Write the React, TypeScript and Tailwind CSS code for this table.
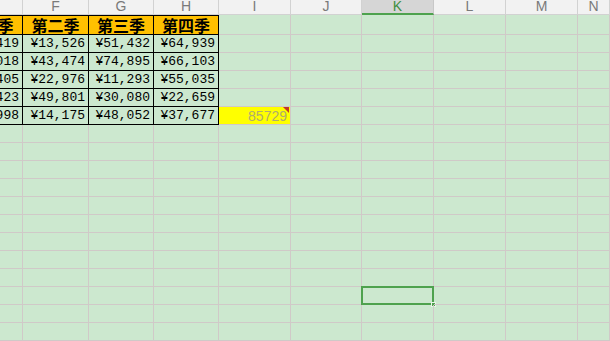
import React from 'react';

const letters = ['E', 'F', 'G', 'H', 'I', 'J', 'K', 'L', 'M', 'N'];

const quarters = ['第一季', '第二季', '第三季', '第四季'];

const values = [
  ['¥32,419', '¥13,526', '¥51,432', '¥64,939'],
  ['¥57,018', '¥43,474', '¥74,895', '¥66,103'],
  ['¥83,405', '¥22,976', '¥11,293', '¥55,035'],
  ['¥17,423', '¥49,801', '¥30,080', '¥22,659'],
  ['¥26,998', '¥14,175', '¥48,052', '¥37,677'],
];

const emptyRows = 12;

const gridCols = 'grid grid-cols-[23px_66px_65px_65px_72px_71px_72px_72px_72px_1fr]';

const App: React.FC = () => {
  return (
    <div className="w-[610px] h-[341px] overflow-hidden bg-[#cce8cf] font-['Liberation_Sans',sans-serif]">
      {/* column headers */}
      <div className={`${gridCols} h-[15px]`}>
        {letters.map((l, i) => (
          <div
            key={l}
            className={
              l === 'K'
                ? 'flex justify-center overflow-hidden bg-[#d6d6d6] border-r border-[#c8c8c8] border-b-2 border-b-[#4ea24e] text-[#3f8f3f] text-[14px] leading-[12px]'
                : 'flex justify-end overflow-hidden bg-[#f2f2f2] border-r border-b border-[#d2d2d2] text-[#7a7a7a] text-[14px] leading-[12px]'
            }
          >
            <div className={l === 'K' ? 'text-center' : i === 0 ? 'w-[65px] shrink-0 text-center' : 'w-full shrink-0 text-center'}>{l}</div>
          </div>
        ))}
      </div>

      {/* quarter header row */}
      <div className={`${gridCols} h-[20px]`}>
        {letters.map((l, i) =>
          i < 4 ? (
            <div key={l} className="flex justify-end items-center overflow-hidden bg-[#ffc000] border-t border-r border-b border-black">
              <div className={`${i === 0 ? 'w-[65px]' : 'w-full'} shrink-0 text-center text-[16px] leading-[18px] font-bold text-black font-['Noto_Sans_CJK_SC',sans-serif]`}>
                {quarters[i]}
              </div>
            </div>
          ) : (
            <div key={l} className="border-r border-b border-[#d0c9c8]" />
          )
        )}
      </div>

      {/* data rows */}
      {values.map((row, r) => (
        <div key={r} className={`${gridCols} h-[18px]`}>
          {letters.map((l, i) => {
            if (i < 4) {
              return (
                <div key={l} className="flex justify-end items-end overflow-hidden border-r border-b border-black">
                  <div className={`${i === 0 ? 'w-[65px]' : 'w-full'} shrink-0 text-right pr-[3px] text-[13px] leading-[16px] text-black font-['Liberation_Mono',monospace]`}>
                    {row[i]}
                  </div>
                </div>
              );
            }
            if (i === 4 && r === 4) {
              return (
                <div key={l} className="relative flex items-center justify-end bg-[#ffff00] border-r border-b border-[#d0c9c8] pr-[3px] text-[14px] leading-[16px] text-[#b0ac6e]">
                  85729
                  <span className="absolute right-[1px] top-0 w-0 h-0 border-t-[6px] border-t-[#c0392b] border-l-[6px] border-l-transparent" />
                </div>
              );
            }
            return <div key={l} className="border-r border-b border-[#d0c9c8]" />;
          })}
        </div>
      ))}

      {/* empty rows */}
      {Array.from({ length: emptyRows }).map((_, r) => (
        <div key={r} className={`${gridCols} h-[18px]`}>
          {letters.map((l) => (
            <div key={l} className="relative border-r border-b border-[#d0c9c8]">
              {l === 'K' && r === 9 && (
                <div className="absolute -left-[1px] -top-[1px] -right-[1px] -bottom-[1px] border-2 border-[#4ea24e]">
                  <span className="absolute -right-[4px] -bottom-[4px] w-[5px] h-[5px] bg-[#4ea24e] border border-[#e8f5e8]" />
                </div>
              )}
            </div>
          ))}
        </div>
      ))}
    </div>
  );
};

export default App;
